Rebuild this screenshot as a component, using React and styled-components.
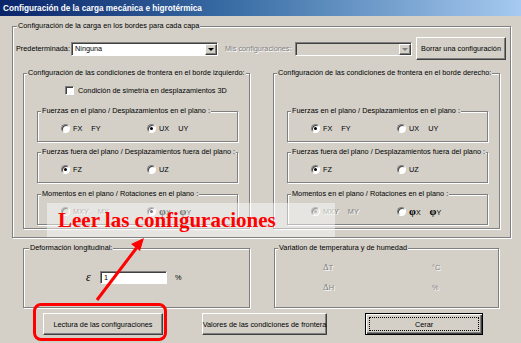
import React from 'react';
import styled, { createGlobalStyle, css } from 'styled-components';

const face = '#d4d0c8';

const GlobalStyle = createGlobalStyle`
  html, body { margin: 0; padding: 0; background: ${face}; }
  body { font-family: "Liberation Sans", Arial, sans-serif; }
`;

const disabledText = css`
  color: #808080;
  text-shadow: 1px 1px 0 #fff;
`;

const Window = styled.div`
  position: relative;
  width: 521px;
  height: 343px;
  overflow: hidden;
  background: ${face};
  font-family: "Liberation Sans", Arial, sans-serif;
  font-size: 7.3px;
  color: #000;
`;

const TitleBar = styled.div`
  height: 16px;
  display: flex;
  align-items: center;
  padding-left: 3px;
  background: linear-gradient(to right, #0a246a 0%, #3a6ea5 45%, #a6caf0 100%);
  color: #fff;
  font-weight: bold;
  font-size: 8.2px;
  white-space: nowrap;
`;

const Group = styled.fieldset`
  margin: ${p => p.$top || 0}px ${p => p.$right || 0}px 0 ${p => p.$left || 0}px;
  padding: 0;
  min-width: 0;
  width: ${p => p.$w}px;
  box-sizing: border-box;
  border: 1px solid #808080;
  box-shadow: 1px 1px 0 #fff, inset 1px 1px 0 #fff;
`;

const Legend = styled.legend`
  padding: 0 1px;
  margin-left: ${p => p.$indent || 3}px;
  line-height: 10px;
  white-space: nowrap;
  background: ${face};
`;

const OuterContent = styled.div`
  padding: 6px 0 8px 3px;
`;

const PresetRow = styled.div`
  display: flex;
  align-items: center;
  height: 23px;
`;

const FieldLabel = styled.span`
  width: ${p => p.$w}px;
  margin-left: ${p => p.$gap || 0}px;
  white-space: nowrap;
  ${p => p.$disabled && disabledText}
`;

const Combo = styled.div`
  width: ${p => p.$w}px;
  height: 14px;
  box-sizing: border-box;
  display: flex;
  background: ${p => (p.$disabled ? face : '#fff')};
  border: 1px solid;
  border-color: #808080 #fff #fff #808080;
  box-shadow: inset 1px 1px 0 #404040;
`;

const ComboText = styled.span`
  flex: 1;
  padding: 1px 0 0 3px;
  line-height: 10px;
`;

const ComboButton = styled.span`
  width: 12px;
  margin: 1px 0 0 0;
  box-sizing: border-box;
  display: flex;
  align-items: center;
  justify-content: center;
  background: ${face};
  border: 1px solid;
  border-color: #fff #404040 #404040 #fff;
  box-shadow: inset -1px -1px 0 #808080;
  &::after {
    content: '';
    border-left: 3px solid transparent;
    border-right: 3px solid transparent;
    border-top: 3px solid ${p => (p.$disabled ? '#808080' : '#000')};
  }
`;

const Button = styled.button`
  width: ${p => p.$w}px;
  height: ${p => p.$h || 22}px;
  margin: 0 0 0 ${p => p.$gap || 0}px;
  padding: 0;
  box-sizing: border-box;
  display: flex;
  align-items: center;
  justify-content: center;
  font: inherit;
  color: #000;
  white-space: nowrap;
  background: ${face};
  border: 1px solid;
  border-color: #fff #404040 #404040 #fff;
  box-shadow: inset -1px -1px 0 #808080;
  ${p =>
    p.$default &&
    css`
      border: 1px solid #000;
      box-shadow: inset 1px 1px 0 #fff, inset -1px -1px 0 #404040, inset -2px -2px 0 #808080;
    `}
`;

const FocusRing = styled.span`
  align-self: stretch;
  flex: 1;
  margin: 3px;
  border: 1px dotted #000;
  display: flex;
  align-items: center;
  justify-content: center;
`;

const Sides = styled.div`
  display: flex;
  gap: 23px;
  margin-top: 8px;
  padding-left: 7px;
`;

const SideContent = styled.div`
  padding-bottom: 3px;
`;

const CheckRow = styled.div`
  display: flex;
  align-items: center;
  gap: 4px;
  height: 10px;
  margin-top: 7px;
  padding-left: 41px;
  white-space: nowrap;
`;

const CheckSpacer = styled.div`
  height: 17px;
`;

const CheckBox = styled.span`
  width: 9px;
  height: 9px;
  box-sizing: border-box;
  background: #fff;
  border: 1px solid;
  border-color: #808080 #fff #fff #808080;
  box-shadow: inset 1px 1px 0 #404040;
`;

const RadioRow = styled.div`
  display: flex;
  align-items: center;
  height: 10px;
  padding: 7px 0 8px 23px;
`;

const RadioOption = styled.div`
  width: 86px;
  display: flex;
  align-items: center;
  gap: 3px;
  white-space: nowrap;
  ${p => p.$disabled && disabledText}
`;

const RadioDot = styled.span`
  position: relative;
  flex: none;
  width: 9px;
  height: 9px;
  box-sizing: border-box;
  border-radius: 50%;
  background: ${p => (p.$disabled ? face : '#fff')};
  border: 1px solid;
  border-color: #808080 #fff #fff #808080;
  box-shadow: inset 1px 1px 0 #404040;
  &::after {
    content: '';
    display: ${p => (p.$checked ? 'block' : 'none')};
    position: absolute;
    left: 2px;
    top: 2px;
    width: 3px;
    height: 3px;
    border-radius: 50%;
    background: ${p => (p.$disabled ? '#808080' : '#000')};
  }
`;

const Pair = styled.span`
  display: flex;
  align-items: baseline;
  gap: 9px;
`;

const Phi = styled.span`
  font-family: "Liberation Serif", "Times New Roman", serif;
  font-weight: bold;
  font-size: 11px;
  & > small {
    font-family: "Liberation Sans", Arial, sans-serif;
    font-weight: normal;
    font-size: 7px;
  }
`;

const BottomRow = styled.div`
  display: flex;
  gap: 24px;
  margin-top: 5px;
  padding-left: 23px;
`;

const BoxContent = styled.div`
  height: 54px;
  box-sizing: border-box;
  padding: ${p => p.$pad};
`;

const StrainRow = styled.div`
  display: flex;
  align-items: center;
  height: 13px;
`;

const Epsilon = styled.span`
  width: 14px;
  font-family: "Liberation Serif", "Times New Roman", serif;
  font-style: italic;
  font-size: 12px;
`;

const TextInput = styled.div`
  width: 67px;
  height: 13px;
  box-sizing: border-box;
  padding: 1px 0 0 3px;
  line-height: 10px;
  background: #fff;
  border: 1px solid;
  border-color: #808080 #fff #fff #808080;
  box-shadow: inset 1px 1px 0 #404040;
`;

const Unit = styled.span`
  margin-left: 8px;
`;

const DeltaRow = styled.div`
  display: flex;
  align-items: center;
  height: 10px;
  margin-top: ${p => p.$top}px;
  ${disabledText}
`;

const DeltaLabel = styled.span`
  width: 109px;
  & > b {
    font-family: "Liberation Serif", serif;
    font-weight: normal;
    font-size: 9px;
  }
`;

const ButtonRow = styled.div`
  display: flex;
  margin-top: 5px;
  padding-left: 43px;
`;

/* ---------- annotation layer ---------- */

const Veil = styled.div`
  position: absolute;
  left: 47px;
  top: 203px;
  width: 288px;
  height: 34px;
  background: rgba(255, 255, 255, 0.45);
`;

const Callout = styled.div`
  position: absolute;
  left: 58px;
  top: 210px;
  font-family: "Liberation Serif", "Times New Roman", serif;
  font-weight: bold;
  font-size: 21px;
  line-height: 21px;
  color: #ff0000;
  white-space: nowrap;
`;

const Highlight = styled.div`
  position: absolute;
  left: 33px;
  top: 303px;
  width: 134px;
  height: 38px;
  box-sizing: border-box;
  border: 3px solid #ff0000;
  border-radius: 8px;
`;

const ArrowLayer = styled.svg`
  position: absolute;
  left: 0;
  top: 0;
  pointer-events: none;
`;

const Radio = ({ checked, disabled, children }) => (
  <RadioOption $disabled={disabled}>
    <RadioDot $checked={checked} $disabled={disabled} />
    {children}
  </RadioOption>
);

const SubGroup = ({ title, top, options }) => (
  <Group $w={201} $top={top} $left={13} $right={11}>
    <Legend>{title}</Legend>
    <RadioRow>
      {options.map((o, i) => (
        <Radio key={i} checked={o.checked} disabled={o.disabled}>
          {o.label}
        </Radio>
      ))}
    </RadioRow>
  </Group>
);

const PhiLabel = () => (
  <Pair>
    <Phi>φ<small>X</small></Phi>
    <Phi>φ<small>Y</small></Phi>
  </Pair>
);

const pairLabel = (a, b) => (
  <Pair>
    <span>{a}</span>
    <span>{b}</span>
  </Pair>
);

const SideGroup = ({ title, symmetry, sel }) => (
  <Group $w={227}>
    <Legend>{title}</Legend>
    <SideContent>
      {symmetry ? (
        <CheckRow>
          <CheckBox />
          <span>Condición de simetría en desplazamientos 3D</span>
        </CheckRow>
      ) : (
        <CheckSpacer />
      )}
      <SubGroup
        title="Fuerzas en el plano / Desplazamientos en el plano :"
        top={11}
        options={[
          { label: pairLabel('FX', 'FY'), checked: sel[0] === 0 },
          { label: pairLabel('UX', 'UY'), checked: sel[0] === 1 },
        ]}
      />
      <SubGroup
        title="Fuerzas fuera del plano / Desplazamientos fuera del plano :"
        top={5}
        options={[
          { label: 'FZ', checked: sel[1] === 0 },
          { label: 'UZ', checked: sel[1] === 1 },
        ]}
      />
      <SubGroup
        title="Momentos en el plano / Rotaciones en el plano :"
        top={6}
        options={[
          { label: pairLabel('MXY', 'MY'), checked: sel[2] === 0, disabled: true },
          { label: <PhiLabel />, checked: sel[2] === 1 },
        ]}
      />
    </SideContent>
  </Group>
);

export default function App() {
  return (
    <>
      <GlobalStyle />
      <Window>
        <TitleBar>Configuración de la carga mecánica e higrotérmica</TitleBar>

        <Group $w={499} $top={5} $left={12}>
          <Legend $indent={4}>Configuración de la carga en los bordes para cada capa</Legend>
          <OuterContent>
            <PresetRow>
              <FieldLabel $w={55}>Predeterminada:</FieldLabel>
              <Combo $w={147}>
                <ComboText>Ninguna</ComboText>
                <ComboButton />
              </Combo>
              <FieldLabel $w={70} $gap={7} $disabled>
                Mis configuraciones:
              </FieldLabel>
              <Combo $w={117} $disabled>
                <ComboText />
                <ComboButton $disabled />
              </Combo>
              <Button $w={90} $h={23} $gap={4}>
                Borrar una configuración
              </Button>
            </PresetRow>

            <Sides>
              <SideGroup
                title="Configuración de las condiciones de frontera en el borde izquierdo:"
                symmetry
                sel={[1, 0, 1]}
              />
              <SideGroup
                title="Configuración de las condiciones de frontera en el borde derecho:"
                sel={[0, 0, 0]}
              />
            </Sides>
          </OuterContent>
        </Group>

        <BottomRow>
          <Group $w={227}>
            <Legend $indent={5}>Deformación longitudinal:</Legend>
            <BoxContent $pad="18px 0 0 62px">
              <StrainRow>
                <Epsilon>ε</Epsilon>
                <TextInput>1</TextInput>
                <Unit>%</Unit>
              </StrainRow>
            </BoxContent>
          </Group>
          <Group $w={225}>
            <Legend>Variation de temperatura y de humedad</Legend>
            <BoxContent $pad="9px 0 0 48px">
              <DeltaRow $top={0}>
                <DeltaLabel><b>Δ</b>T</DeltaLabel>
                <span>°C</span>
              </DeltaRow>
              <DeltaRow $top={10}>
                <DeltaLabel><b>Δ</b>H</DeltaLabel>
                <span>%</span>
              </DeltaRow>
            </BoxContent>
          </Group>
        </BottomRow>

        <ButtonRow>
          <Button $w={120}>Lectura de las configuraciones</Button>
          <Button $w={125} $gap={39}>
            Valores de las condiciones de frontera
          </Button>
          <Button $w={118} $gap={38} $default>
            <FocusRing>Cerar</FocusRing>
          </Button>
        </ButtonRow>

        <Veil />
        <Callout>Leer las configuraciones</Callout>
        <Highlight />
        <ArrowLayer width="521" height="343" viewBox="0 0 521 343">
          <line x1="97" y1="300" x2="138" y2="246" stroke="#ff0000" strokeWidth="3" />
          <polygon points="144,238 131,244 140,251" fill="#ff0000" />
        </ArrowLayer>
      </Window>
    </>
  );
}
